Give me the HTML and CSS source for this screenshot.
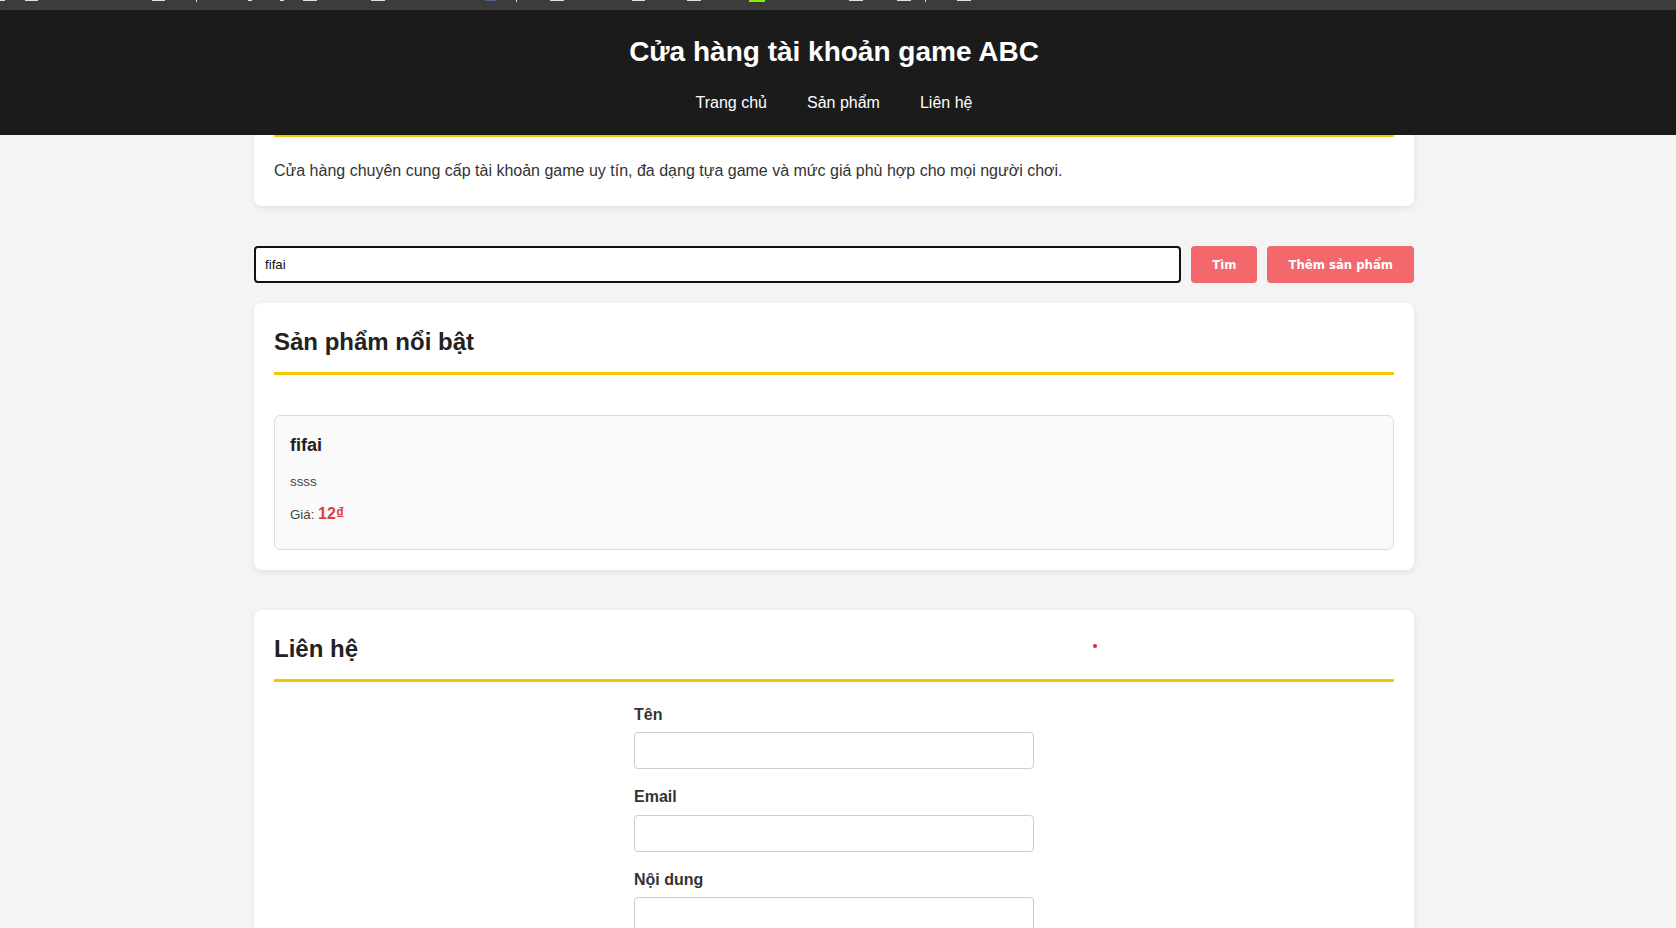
FILE: index.html
```html
<!DOCTYPE html>
<html lang="vi">
<head>
<meta charset="utf-8">
<title>Cửa hàng tài khoản game ABC</title>
<link rel="stylesheet" href="styles.css">
</head>
<body>
<header class="site-header">
  <div class="topstrip"></div>
  <div class="header-inner">
    <h1 class="site-title">Cửa hàng tài khoản game ABC</h1>
    <nav class="nav">
      <a href="#">Trang chủ</a>
      <a href="#">Sản phẩm</a>
      <a href="#">Liên hệ</a>
    </nav>
  </div>
</header>
<main class="container">
  <section class="card">
    <h2 class="card-title">Giới thiệu</h2>
    <p class="intro">Cửa hàng chuyên cung cấp tài khoản game uy tín, đa dạng tựa game và mức giá phù hợp cho mọi người chơi.</p>
  </section>

  <div class="search-row">
    <input class="search-input" type="text" value="fifai">
    <button class="btn" type="button">Tìm</button>
    <button class="btn" type="button">Thêm sản phẩm</button>
  </div>

  <section class="card">
    <h2 class="card-title">Sản phẩm nổi bật</h2>
    <div class="product-list">
      <div class="product">
        <h3 class="product-name">fifai</h3>
        <p class="product-desc">ssss</p>
        <p class="product-price">Giá: <span class="price-value">12₫</span></p>
      </div>
    </div>
  </section>

  <section class="card contact">
    <span class="dot"></span>
    <h2 class="card-title">Liên hệ</h2>
    <form class="contact-form">
      <label class="field-label" for="name">Tên</label>
      <input class="field" id="name" type="text">
      <label class="field-label" for="email">Email</label>
      <input class="field" id="email" type="email">
      <label class="field-label" for="msg">Nội dung</label>
      <textarea class="field field-area" id="msg"></textarea>
      <button class="btn send" type="button">Gửi</button>
    </form>
  </section>
</main>
</body>
</html>
```

FILE: styles.css
```css
html, body {
  margin: 0;
  padding: 0;
}

body {
  background: #f4f4f4;
  color: #333;
  font-family: "Liberation Sans", Arial, sans-serif;
  font-size: 16px;
  line-height: 1.6;
  padding-right: 8px;
}

/* ---------- header ---------- */
.site-header {
  position: fixed;
  top: 0;
  left: 0;
  right: 0;
  z-index: 10;
}

.topstrip {
  height: 10px;
  background-color: #3c3c3c;
  background-image:
    linear-gradient(#e0e0e0, #e0e0e0),
    linear-gradient(#e0e0e0, #e0e0e0),
    linear-gradient(#e0e0e0, #e0e0e0),
    linear-gradient(#e0e0e0, #e0e0e0),
    linear-gradient(#e0e0e0, #e0e0e0),
    linear-gradient(#e0e0e0, #e0e0e0),
    linear-gradient(#e0e0e0, #e0e0e0),
    linear-gradient(#e0e0e0, #e0e0e0),
    linear-gradient(#4b5f8a, #4b5f8a),
    linear-gradient(#e0e0e0, #e0e0e0),
    linear-gradient(#e0e0e0, #e0e0e0),
    linear-gradient(#e0e0e0, #e0e0e0),
    linear-gradient(#e0e0e0, #e0e0e0),
    linear-gradient(#7cf000, #7cf000),
    linear-gradient(#e0e0e0, #e0e0e0),
    linear-gradient(#e0e0e0, #e0e0e0),
    linear-gradient(#e0e0e0, #e0e0e0),
    linear-gradient(#e0e0e0, #e0e0e0);
  background-repeat: no-repeat;
  background-position:
    0 0, 25px 0, 152px 0, 196px 0, 248px 0, 280px 0, 303px 0, 371px 0,
    485px 0, 516px 0, 550px 0, 632px 0, 687px 0, 749px 0, 849px 0,
    897px 0, 925px 0, 957px 0;
  background-size:
    5px 1px, 13px 1px, 13px 1px, 1px 2px, 4px 1px, 4px 1px, 14px 1px, 14px 1px,
    11px 1px, 1px 2px, 14px 1px, 13px 1px, 14px 1px, 16px 2px, 14px 1px,
    14px 1px, 1px 2px, 14px 1px;
}

.header-inner {
  background: #1b1b1b;
  color: #fff;
  text-align: center;
  padding: 20px 8px 20px 0;
}

.site-title {
  margin: 0 0 15px;
  font-size: 28px;
  font-weight: 700;
  line-height: 1.6;
  color: #fff;
}

.nav {
  display: flex;
  justify-content: center;
  gap: 40px;
}

.nav a {
  color: #fff;
  text-decoration: none;
  font-size: 16px;
}

/* ---------- layout ---------- */
.container {
  max-width: 1160px;
  margin: 0 auto;
  padding-top: 66px;
}

.card {
  background: #fff;
  border-radius: 8px;
  padding: 20px;
  margin-bottom: 40px;
  box-shadow: 0 2px 6px rgba(0, 0, 0, 0.08);
}

.card-title {
  margin: 0 0 20px;
  padding-bottom: 10px;
  border-bottom: 3px solid #f6c700;
  font-size: 24px;
  font-weight: 700;
  color: #222;
}

.intro {
  margin: 0;
  line-height: 1.8;
  color: #333;
}

/* ---------- search ---------- */
.search-row {
  display: flex;
  gap: 10px;
  margin-bottom: 20px;
}

.search-input {
  flex: 1;
  height: 37px;
  box-sizing: border-box;
  border: 2px solid #111;
  border-radius: 4px;
  padding: 0 9px;
  font-family: "Liberation Sans", Arial, sans-serif;
  font-size: 13.3px;
  color: #111;
  background: #fff;
  outline: none;
}

.btn {
  height: 37px;
  border: none;
  border-radius: 4px;
  background: #f2686d;
  color: #fff;
  padding: 0 21px;
  font-family: "DejaVu Sans Condensed", "DejaVu Sans", sans-serif;
  font-stretch: condensed;
  font-weight: 700;
  font-size: 13px;
  cursor: pointer;
}

/* ---------- products ---------- */
.product-list {
  margin-top: 40px;
}

.product {
  background: #fafafa;
  border: 1px solid #ddd;
  border-radius: 6px;
  padding: 15px;
}

.product-name {
  margin: 0 0 12px;
  font-size: 18px;
  font-weight: 700;
  color: #222;
}

.product-desc,
.product-price {
  margin: 8px 0;
  font-size: 13.3px;
  color: #444;
}

.price-value {
  color: #e03c3c;
  font-weight: 700;
  font-size: 16px;
}

/* ---------- contact ---------- */
.contact {
  position: relative;
}

.dot {
  position: absolute;
  left: 839px;
  top: 34px;
  width: 4px;
  height: 4px;
  border-radius: 50%;
  background: #d9282e;
}

.contact-form {
  max-width: 400px;
  margin: 0 auto;
}

.field-label {
  display: block;
  margin-bottom: 5px;
  font-weight: 700;
  font-size: 16px;
  color: #333;
}

.field {
  display: block;
  width: 100%;
  height: 37px;
  box-sizing: border-box;
  margin: 0 0 15px;
  border: 1px solid #ccc;
  border-radius: 4px;
  padding: 8px 10px;
  font-family: "Liberation Sans", Arial, sans-serif;
  font-size: 14px;
  background: #fff;
}

.field-area {
  height: 100px;
  resize: vertical;
}

.send {
  margin-top: 5px;
}
```
